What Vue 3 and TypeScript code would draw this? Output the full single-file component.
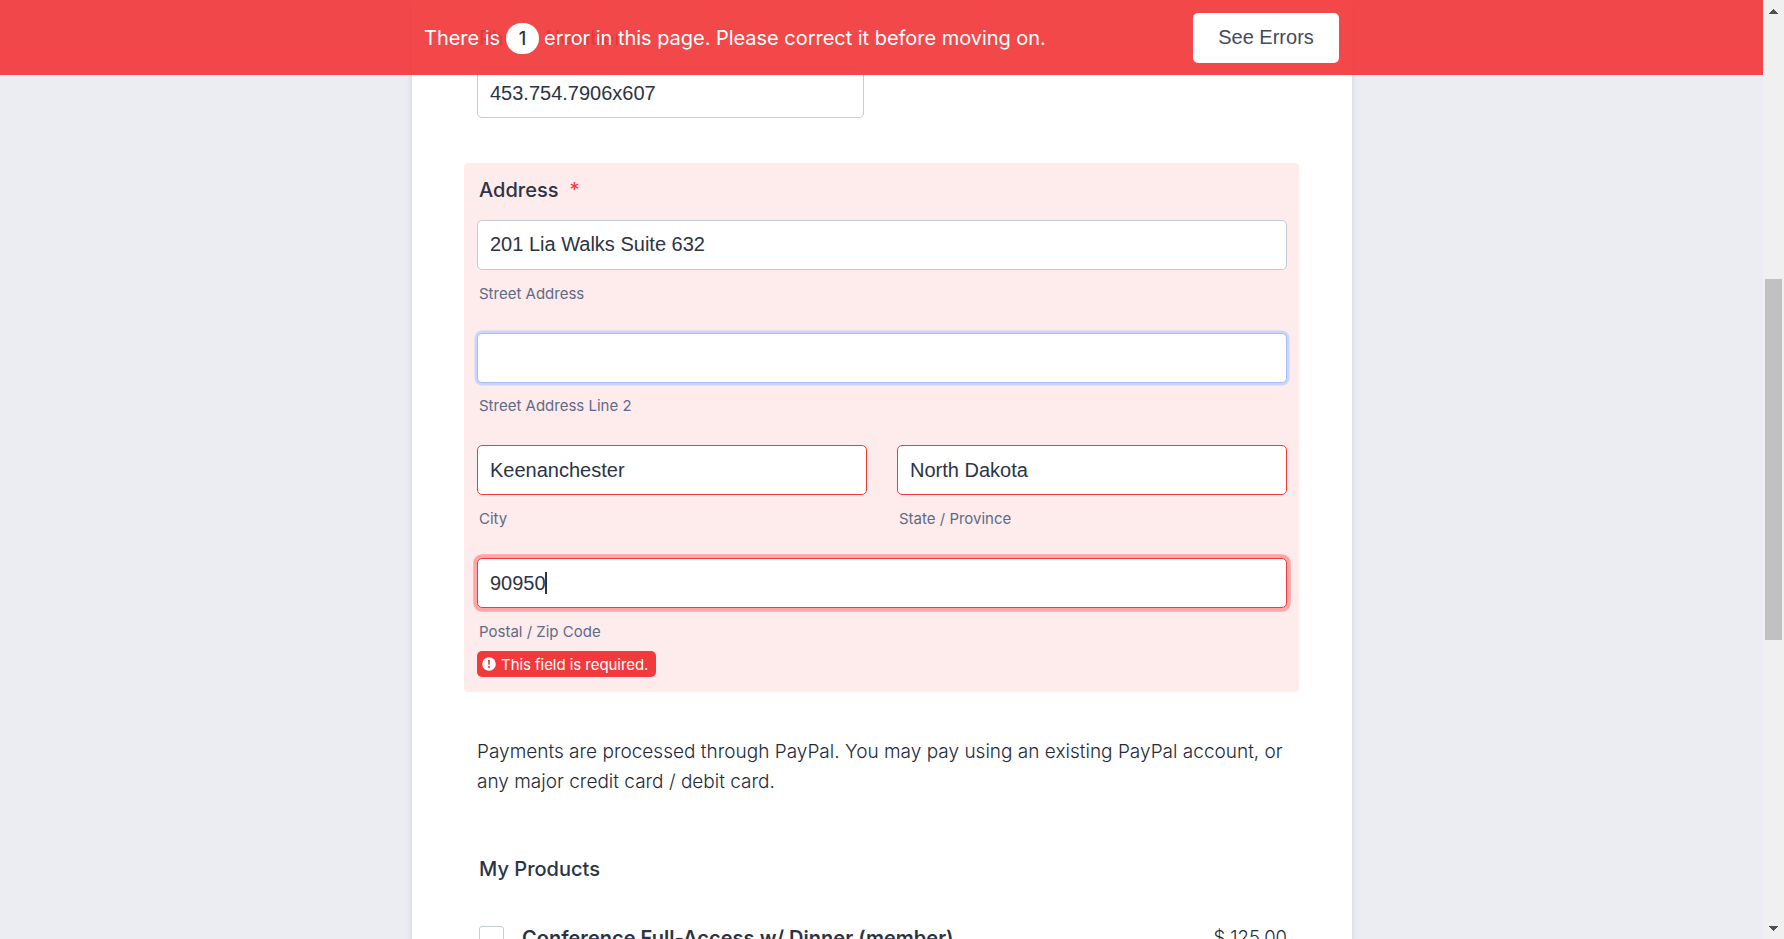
<script setup lang="ts">
import { ref } from 'vue'

interface Field {
  value: string
  label: string
  state: 'normal' | 'focus' | 'error' | 'active'
}

const errorCount = ref(1)
const phone = '453.754.7906x607'

const addressRows: Field[][] = [
  [{ value: '201 Lia Walks Suite 632', label: 'Street Address', state: 'normal' }],
  [{ value: '', label: 'Street Address Line 2', state: 'focus' }],
  [
    { value: 'Keenanchester', label: 'City', state: 'error' },
    { value: 'North Dakota', label: 'State / Province', state: 'error' },
  ],
  [{ value: '90950', label: 'Postal / Zip Code', state: 'active' }],
]
</script>

<template>
  <div class="window">
    <main class="page">
      <header class="banner">
        <div class="banner-inner">
          <p class="banner-text">
            <span class="t-a">There is</span><span class="count">{{ errorCount }}</span><span class="t-b">error in this page. Please correct it before moving on.</span>
          </p>
          <button class="see-errors" type="button">See Errors</button>
        </div>
      </header>

      <form class="card">
        <div class="phone">
          <div class="label"><span>Phone Number</span></div>
          <div class="box">{{ phone }}</div>
        </div>

        <section class="address">
          <div class="label"><span>Address</span><span class="star">*</span></div>
          <div v-for="(row, i) in addressRows" :key="i" class="row">
            <div v-for="field in row" :key="field.label" class="field">
              <div class="box" :class="field.state">
                <span>{{ field.value }}</span><i v-if="field.state === 'active'" class="caret"></i>
              </div>
              <div class="sub"><span>{{ field.label }}</span></div>
            </div>
          </div>
          <div class="error-msg">
            <svg class="error-icon" viewBox="0 0 14 14" aria-hidden="true">
              <circle cx="7" cy="7" r="6.8" fill="#fff" />
              <path d="M6 2.9h2l-.3 4.9H6.3z" fill="#f23a3c" />
              <circle cx="7" cy="10" r="1.1" fill="#f23a3c" />
            </svg>
            <span>This field is required.</span>
          </div>
        </section>

        <p class="note">
          <span>Payments are processed through PayPal. You may pay using an existing PayPal account, or any major credit card / debit card.</span>
        </p>

        <section class="products">
          <div class="label"><span>My Products</span></div>
          <div class="product">
            <i class="check"></i>
            <span class="name">Conference Full-Access w/ Dinner (member)</span>
            <span class="price">$ 125.00</span>
          </div>
        </section>
      </form>
    </main>

    <aside class="scrollbar">
      <svg width="9" height="5" viewBox="0 0 9 5" shape-rendering="crispEdges"><path d="M4 0h1v1h1v1h1v1h1v1h1v1H0V4h1V3h1V2h1V1h1z" fill="#505050" /></svg>
      <div class="thumb"></div>
      <svg class="down" width="9" height="5" viewBox="0 0 9 5" shape-rendering="crispEdges"><path d="M0 0h9v1H8v1H7v1H6v1H5v1H4V4H3V3H2V2H1V1H0z" fill="#505050" /></svg>
    </aside>
  </div>
</template>

<style>
html,
body {
  margin: 0;
  overflow: hidden;
}
</style>

<style scoped>
* {
  box-sizing: border-box;
}
.window {
  display: flex;
  width: 1784px;
  height: 939px;
  overflow: hidden;
  font-family: Inter, 'Liberation Sans', sans-serif;
  color: #2c3345;
}
.page {
  position: relative;
  width: 1763px;
  height: 939px;
  overflow: hidden;
  background: #ecedf3;
}
.banner {
  position: absolute;
  z-index: 2;
  inset: 0 0 auto 0;
  height: 75px;
  background: rgba(242, 58, 60, 0.93);
}
.banner-inner {
  display: flex;
  align-items: flex-start;
  justify-content: space-between;
  width: 940px;
  margin-left: 412px;
  padding: 13px 13px 0 12px;
}
.banner-text {
  display: flex;
  align-items: center;
  height: 50px;
  margin: 0;
  font-size: 20px;
  letter-spacing: -0.03px;
  color: #fff;
  white-space: nowrap;
}
.count {
  width: 33px;
  height: 31px;
  margin: 0 5px 0 6px;
  border-radius: 16px;
  background: #fff;
  color: #2c3345;
  font-size: 18px;
  font-weight: 500;
  line-height: 31px;
  text-align: center;
}
.see-errors {
  width: 146px;
  height: 50px;
  padding: 0 0 2px;
  border: 0;
  border-radius: 5px;
  background: #fff;
  color: #434a60;
  font: 20px 'Liberation Sans', Arial, sans-serif;
}
.card {
  width: 940px;
  height: 1000px;
  margin-left: 412px;
  padding: 23px 52px 0;
  background: #fff;
  box-shadow: 0 5px 5px rgba(87, 100, 126, 0.21);
}
.label {
  display: flex;
  font-size: 20px;
  font-weight: 500;
  line-height: 30px;
  letter-spacing: 0.02px;
  padding-left: 2px;
  white-space: nowrap;
}
.star {
  margin-left: 11px;
  color: #f23a3c;
  font-weight: 400;
}
.box {
  display: flex;
  align-items: center;
  height: 50px;
  padding: 0 12px;
  border: 1px solid #c3cad8;
  border-radius: 5px;
  background: #fff;
  font: 20px/22px 'Liberation Sans', Arial, sans-serif;
  white-space: nowrap;
}
.phone {
  width: 387px;
  margin-left: 13px;
}
.phone .label {
  height: 45px;
}
.address {
  width: 835px;
  height: 529px;
  margin-top: 45px;
  padding: 12px 12px 0 13px;
  border-radius: 4px;
  background: #feecec;
}
.address .label {
  height: 45px;
}
.row {
  display: flex;
  gap: 30px;
  height: 113px;
}
.row:nth-child(3) {
  height: 112px;
}
.row:nth-child(5) {
  height: 93px;
}
.field {
  flex: 1;
}
.normal {
  padding-bottom: 2px;
}
.focus {
  border-color: #a6bdf9;
  box-shadow: 0 0 0 2.5px #c8d6fc;
}
.error {
  border-color: #f23a3c;
}
.active {
  border-color: #f23a3c;
  box-shadow: 0 0 0 3.75px #fea5a6;
}
.caret {
  width: 2px;
  height: 22px;
  margin-left: -1px;
  background: #2c3345;
}
.sub {
  margin: 13px 0 0 2px;
  font-size: 15px;
  line-height: 22px;
  color: #5f6b86;
  white-space: nowrap;
}
.row:nth-child(3) .sub {
  margin-top: 12px;
}
.error-msg {
  display: flex;
  align-items: center;
  width: 179px;
  height: 26px;
  padding: 1px 0 0 5px;
  gap: 5px;
  border-radius: 5px;
  background: #f23a3c;
  color: #fff;
  font-size: 15px;
  letter-spacing: -0.05px;
  white-space: nowrap;
}
.error-icon {
  width: 14px;
  height: 14px;
  margin-top: -1px;
}
.note {
  width: 812px;
  margin: 45px 0 0 13px;
  font-size: 19px;
  font-weight: 300;
  line-height: 30px;
  letter-spacing: 0.01px;
  color: #232a3b;
}
.products {
  width: 810px;
  margin: 57px 0 0 13px;
}
.product {
  display: flex;
  align-items: flex-start;
  margin-top: 42px;
  padding-left: 2px;
  line-height: 25px;
  white-space: nowrap;
}
.check {
  width: 25px;
  height: 25px;
  border: 1px solid #c3cad8;
  border-radius: 3px;
}
.name {
  margin-left: 18px;
  font-size: 20px;
  font-weight: 600;
  letter-spacing: 0.02px;
}
.price {
  margin-left: auto;
  font-size: 18.5px;
  line-height: 23px;
  font-weight: 300;
  color: #232a3b;
}
.scrollbar {
  display: flex;
  flex-direction: column;
  align-items: center;
  width: 21px;
  height: 939px;
  padding: 9px 0 8px;
  background: #f0f0f0;
}
.thumb {
  width: 17px;
  height: 361px;
  margin-top: 265px;
  background: #c1c1c1;
}
.down {
  margin-top: auto;
}
</style>
